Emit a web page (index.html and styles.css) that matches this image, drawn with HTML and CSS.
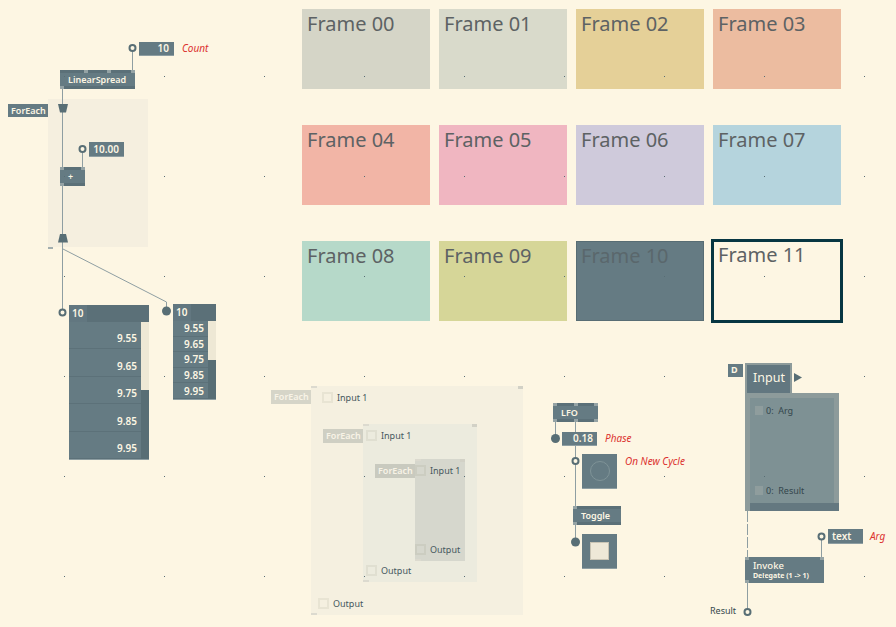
FILE: index.html
```html
<!DOCTYPE html>
<html lang="en">
<head>
  <meta charset="UTF-8">
  <title>Patch</title>
  <link rel="stylesheet" href="styles.css">
</head>
<body>

  <div class="patch">

    <!-- frames -->
    <div class="frames">
      <div class="frame f00">Frame 00</div>
      <div class="frame f01">Frame 01</div>
      <div class="frame f02">Frame 02</div>
      <div class="frame f03">Frame 03</div>
      <div class="frame f04">Frame 04</div>
      <div class="frame f05">Frame 05</div>
      <div class="frame f06">Frame 06</div>
      <div class="frame f07">Frame 07</div>
      <div class="frame f08">Frame 08</div>
      <div class="frame f09">Frame 09</div>
      <div class="frame f10">Frame 10</div>
      <div class="frame f11">Frame 11</div>
    </div>

    <!-- regions -->
    <div class="region region-a">
      <span class="handle bl"></span>
    </div>

    <div class="region fe-outer">
      <span class="handle tl"></span><span class="handle tr"></span><span class="handle bl"></span>
      <div class="port in"><i></i>Input 1</div>
      <div class="port out"><i></i>Output</div>
    </div>
    <div class="region fe-middle">
      <span class="handle tl"></span><span class="handle tr"></span><span class="handle bl"></span>
      <div class="port"><i></i>Input 1</div>
      <div class="port"><i></i>Output</div>
    </div>
    <div class="region fe-inner">
      <span class="handle tl"></span><span class="handle tr"></span><span class="handle bl"></span>
      <div class="port"><i></i>Input 1</div>
      <div class="port"><i></i>Output</div>
    </div>

    <div class="fe-label l-outer">ForEach</div>
    <div class="fe-label l-middle">ForEach</div>
    <div class="fe-label l-inner">ForEach</div>

    <!-- links and pins -->
    <svg class="links" width="896" height="627" viewBox="0 0 896 627">
      <g stroke="#8e9ea2" stroke-width="1" fill="none">
        <path d="M132.5 52V70"/>
        <path d="M62.5 89V309"/>
        <path d="M82.5 153V167"/>
        <path d="M63 249L166.5 302V308"/>
        <path d="M555.5 422V435"/>
        <path d="M575.5 422V507"/>
        <path d="M575.5 525V538"/>
        <path d="M747.5 511V557" stroke-dasharray="11 2"/>
        <path d="M821.5 540V557"/>
        <path d="M747.5 583V608"/>
      </g>
      <g fill="#586e75">
        <polygon points="58,104 68,104 66,112.5 60,112.5"/>
        <polygon points="60,234 66,234 68,242.5 58,242.5"/>
        <circle cx="166.5" cy="311" r="4.5"/>
        <circle cx="555.5" cy="438.5" r="4.5"/>
        <circle cx="575.5" cy="542" r="4.5"/>
        <polygon points="794,373 802,377.5 794,382"/>
      </g>
      <g fill="#fdf6e3" stroke="#586e75" stroke-width="2">
        <circle cx="132.5" cy="48" r="3"/>
        <circle cx="82.5" cy="149" r="3"/>
        <circle cx="62.5" cy="312.5" r="3"/>
        <circle cx="575.5" cy="461" r="3"/>
        <circle cx="821.5" cy="536.5" r="3"/>
        <circle cx="747.5" cy="612" r="3"/>
      </g>
    </svg>

    <!-- spread example -->
    <div class="fe-label dark l-top">ForEach</div>

    <div class="iobox count">10</div>
    <div class="tag tag-count">Count</div>

    <div class="node linear-spread">
      <div class="pins"><i class="dim"></i><i></i><i></i><i></i></div>
      <span class="name">LinearSpread</span>
      <div class="pins"><i></i></div>
    </div>

    <div class="iobox ten">10.00</div>

    <div class="node plus">
      <div class="pins"><i></i><i></i></div>
      <span class="name">+</span>
      <div class="pins"><i></i></div>
    </div>

    <div class="spread spread-a">
      <div class="spread-head"><span>10</span></div>
      <div class="spread-row">9.55</div>
      <div class="spread-row">9.65</div>
      <div class="spread-row">9.75</div>
      <div class="spread-row">9.85</div>
      <div class="spread-row">9.95</div>
      <div class="scroll"><b></b></div>
    </div>

    <div class="spread spread-b">
      <div class="spread-head"><span>10</span></div>
      <div class="spread-row">9.55</div>
      <div class="spread-row">9.65</div>
      <div class="spread-row">9.75</div>
      <div class="spread-row">9.85</div>
      <div class="spread-row">9.95</div>
      <div class="scroll"><b></b></div>
    </div>

    <!-- lfo example -->
    <div class="node lfo">
      <div class="pins"><i></i><i></i><i></i></div>
      <span class="name">LFO</span>
      <div class="pins"><i></i><i></i><i></i></div>
    </div>
    <div class="iobox phase">0.18</div>
    <div class="tag tag-phase">Phase</div>

    <div class="iobox bang"><span class="ring"></span></div>
    <div class="tag tag-cycle">On New Cycle</div>

    <div class="node toggle">
      <div class="pins"><i></i></div>
      <span class="name">Toggle</span>
      <div class="pins"><i></i></div>
    </div>
    <div class="iobox switch"><span class="knob"></span></div>

    <!-- delegate example -->
    <div class="d-box">D</div>
    <div class="input-head">Input</div>
    <div class="input-region">
      <div class="input-panel">
        <div class="arg"><i></i>0:&nbsp; Arg</div>
        <div class="arg"><i></i>0:&nbsp; Result</div>
      </div>
    </div>

    <div class="iobox text-box">text</div>
    <div class="tag tag-arg">Arg</div>

    <div class="node invoke">
      <div class="pins"><i></i><i></i></div>
      <div class="name">
        <span>Invoke</span>
        <small>Delegate (1 -&gt; 1)</small>
      </div>
      <div class="pins"><i></i></div>
    </div>

    <div class="result">Result</div>

  </div>

</body>
</html>
```

FILE: styles.css
```css
* {
  box-sizing: border-box;
}

body {
  margin: 0;
  background: #fdf6e3;
  font-family: "Noto Sans", "Open Sans", sans-serif;
}

.patch {
  position: relative;
  width: 896px;
  height: 627px;
  overflow: hidden;
  background: #fdf6e3;
}

/* grid dots sit on top of everything */
.patch::after {
  content: "";
  position: absolute;
  inset: 0;
  pointer-events: none;
  z-index: 10;
  background: linear-gradient(to right, #586e75 1px, transparent 1px);
  background-size: 100px 100px;
  background-position: 64px 76px;
  -webkit-mask-image: linear-gradient(to bottom, #000 1px, transparent 1px);
  -webkit-mask-size: 100px 100px;
  -webkit-mask-position: 64px 76px;
  mask-image: linear-gradient(to bottom, #000 1px, transparent 1px);
  mask-size: 100px 100px;
  mask-position: 64px 76px;
}

.links {
  position: absolute;
  left: 0;
  top: 0;
}

/* ---------- frames ---------- */

.frames {
  position: absolute;
  left: 302px;
  top: 9px;
  display: grid;
  grid-template-columns: repeat(4, 128px);
  grid-auto-rows: 80px;
  column-gap: 9px;
  row-gap: 36px;
}

.frame {
  padding: 3px 5px;
  font-size: 20px;
  line-height: 24px;
  color: #5d6264;
}

.f00 { background: #d5d5c7; }
.f01 { background: #d9dacb; }
.f02 { background: #e5d098; }
.f03 { background: #ecbca0; }
.f04 { background: #f2b5a6; }
.f05 { background: #f0b6c1; }
.f06 { background: #cfcadb; }
.f07 { background: #b5d4dd; }
.f08 { background: #b6d9c9; }
.f09 { background: #d6d698; }
.f10 {
  background: #657b83;
  border: 1px solid #586d74;
  padding: 2px 4px;
  color: #5a676c;
}
.f11 {
  margin: -2px;
  border: 3px solid #073642;
  padding: 1px 4px;
}

/* ---------- regions ---------- */

.region {
  position: absolute;
}

.handle {
  position: absolute;
  width: 6px;
  height: 2px;
  background: #dcdacf;
}
.handle.tl { left: 0; top: 0; }
.handle.tr { right: 0; top: 0; width: 5px; height: 3px; background: #d2d1c6; }
.handle.bl { left: 0; bottom: 0; }

.region-a {
  left: 48px;
  top: 99px;
  width: 100px;
  height: 148px;
  background: #f5efdf;
}
.region-a .handle.bl {
  bottom: -2px;
  width: 5px;
  background: #a3aeae;
}

.fe-outer {
  left: 311px;
  top: 386px;
  width: 212px;
  height: 229px;
  background: #f5f0e0;
}
.fe-middle {
  left: 363px;
  top: 424px;
  width: 114px;
  height: 158px;
  background: #ecebde;
}
.fe-inner {
  left: 415px;
  top: 459px;
  width: 50px;
  height: 102px;
  background: #d6d7cd;
}

.fe-outer,
.fe-middle,
.fe-inner {
  display: flex;
  flex-direction: column;
  justify-content: space-between;
  padding: 6px 0 6px 3px;
}
.fe-inner {
  padding-left: 0;
}
.fe-outer .in { margin-left: 8px; }
.fe-outer .out { margin-left: 4px; }

.port {
  display: flex;
  align-items: center;
  gap: 4px;
  height: 11px;
  font-size: 9px;
  color: #46585e;
  white-space: nowrap;
}
.port i {
  width: 11px;
  height: 11px;
  border: 2px solid rgba(90, 90, 60, 0.08);
}

.fe-label {
  position: absolute;
  width: 40px;
  height: 14px;
  padding-left: 3px;
  font-size: 9px;
  font-weight: 600;
  line-height: 14px;
  color: #f8f3e6;
}
.l-outer { left: 271px; top: 390px; background: #d6d5c8; }
.l-middle { left: 323px; top: 429px; background: #cfcfc3; }
.l-inner { left: 375px; top: 464px; background: #c9cabf; }
.fe-label.dark {
  background: #657b83;
  color: #fdf6e3;
  height: 13px;
  line-height: 13px;
}
.l-top { left: 8px; top: 104px; }

/* ---------- nodes ---------- */

.node {
  position: absolute;
  display: flex;
  flex-direction: column;
  background: #657b83;
  color: #fdf6e3;
  font-size: 9px;
  font-weight: 600;
}
.node .pins {
  display: flex;
  justify-content: space-between;
  height: 3px;
  background: #5b7078;
}
.node .pins i {
  width: 4px;
  height: 3px;
  background: #95a3a5;
}
.node .pins i.dim {
  background: #5b7078;
}
.node .name {
  flex: 1;
  display: flex;
  align-items: center;
  padding-left: 8px;
}

.linear-spread { left: 60px; top: 70px; width: 75px; height: 19px; }
.plus { left: 60px; top: 167px; width: 25px; height: 19px; }
.lfo { left: 553px; top: 403px; width: 45px; height: 19px; }
.toggle { left: 573px; top: 506px; width: 48px; height: 19px; }

.invoke {
  left: 745px;
  top: 557px;
  width: 79px;
  height: 26px;
}
.invoke .pins {
  background: transparent;
}
.invoke .name {
  flex-direction: column;
  align-items: flex-start;
  justify-content: center;
  font-weight: 500;
  font-size: 9.5px;
  line-height: 10px;
}
.invoke small {
  font-size: 7px;
  font-weight: 700;
  line-height: 9px;
}

/* ---------- io boxes ---------- */

.iobox {
  position: absolute;
  width: 35px;
  height: 14px;
  padding-right: 5px;
  background: #657b83;
  border-bottom: 1px solid #8e9ea2;
  color: #fdf6e3;
  font-size: 10px;
  font-weight: 600;
  line-height: 13px;
  text-align: right;
}
.count { left: 139px; top: 42px; }
.ten { left: 89px; top: 142px; height: 15px; line-height: 14px; }
.phase { left: 562px; top: 432px; padding-right: 4px; }
.text-box {
  left: 828px;
  top: 529px;
  height: 15px;
  line-height: 14px;
  text-align: left;
  padding-left: 4px;
}

.bang,
.switch {
  display: flex;
  align-items: center;
  justify-content: center;
  height: 35px;
  padding: 0;
}
.bang { left: 582px; top: 454px; }
.switch { left: 582px; top: 534px; }

.ring {
  width: 20px;
  height: 20px;
  border: 1px solid #7f9397;
  border-radius: 50%;
}
.knob {
  width: 19px;
  height: 18px;
  background: #eee8d7;
  border: 1px solid #c9c4b4;
}

.tag {
  position: absolute;
  color: #dc322f;
  font-size: 10px;
  font-style: italic;
  line-height: 14px;
}
.tag-count { left: 182px; top: 41px; }
.tag-phase { left: 605px; top: 431px; }
.tag-cycle { left: 625px; top: 454px; }
.tag-arg { left: 870px; top: 529px; }

/* ---------- spreads ---------- */

.spread {
  position: absolute;
  display: flex;
  flex-direction: column;
  background: #657b83;
  border-bottom: 1px solid #8e9ea2;
  color: #fdf6e3;
  font-size: 10px;
  font-weight: 600;
}
.spread-head {
  height: 17px;
  background: #5b7078;
}
.spread-head span {
  display: block;
  width: 18px;
  height: 17px;
  padding-left: 3px;
  line-height: 17px;
  background: #627780;
}
.spread-row {
  flex: 1;
  display: flex;
  align-items: flex-end;
  justify-content: flex-end;
  border-bottom: 1px solid #5c7179;
  line-height: 14px;
}
.spread-row:last-of-type {
  border-bottom: none;
}
.scroll {
  position: absolute;
  right: 0;
  top: 17px;
  bottom: 0;
  width: 8px;
  background: #586e75;
}
.scroll b {
  display: block;
  background: #eee8d5;
}

.spread-a { left: 69px; top: 305px; width: 80px; height: 155px; }
.spread-a .spread-row { padding: 0 12px 3px 0; }
.spread-a .scroll b { height: 68px; }

.spread-b { left: 173px; top: 304px; width: 43px; height: 96px; }
.spread-b .spread-row { align-items: center; padding: 0 12px 0 0; }
.spread-b .scroll b { height: 39px; }

/* ---------- delegate ---------- */

.d-box {
  position: absolute;
  left: 728px;
  top: 364px;
  width: 15px;
  height: 13px;
  padding-left: 3px;
  background: #657b83;
  color: #fdf6e3;
  font-size: 9px;
  font-weight: 700;
  line-height: 11px;
}

.input-head {
  position: absolute;
  left: 745px;
  top: 363px;
  width: 47px;
  height: 31px;
  padding-left: 6px;
  background: #627780;
  border: 2px solid #8d9b9b;
  border-bottom: none;
  color: #fdf6e3;
  font-size: 12.5px;
  line-height: 26px;
}

.input-region {
  position: absolute;
  left: 745px;
  top: 393px;
  width: 94px;
  height: 118px;
  padding: 5px 5px 8px;
  background: #8d9b9b;
}
.input-region::after {
  content: "";
  position: absolute;
  left: 5px;
  right: 0;
  bottom: 0;
  height: 8px;
  background: #647880;
}
.input-panel {
  height: 100%;
  display: flex;
  flex-direction: column;
  justify-content: space-between;
  padding: 8px 5px;
  background: #7e9194;
}
.arg {
  display: flex;
  align-items: center;
  gap: 3px;
  height: 9px;
  font-size: 9px;
  color: #34474d;
  white-space: nowrap;
}
.arg i {
  width: 8px;
  height: 9px;
  background: #8f9d9d;
}

.result {
  position: absolute;
  left: 710px;
  top: 604px;
  font-size: 9px;
  line-height: 14px;
  color: #34474d;
}
```
